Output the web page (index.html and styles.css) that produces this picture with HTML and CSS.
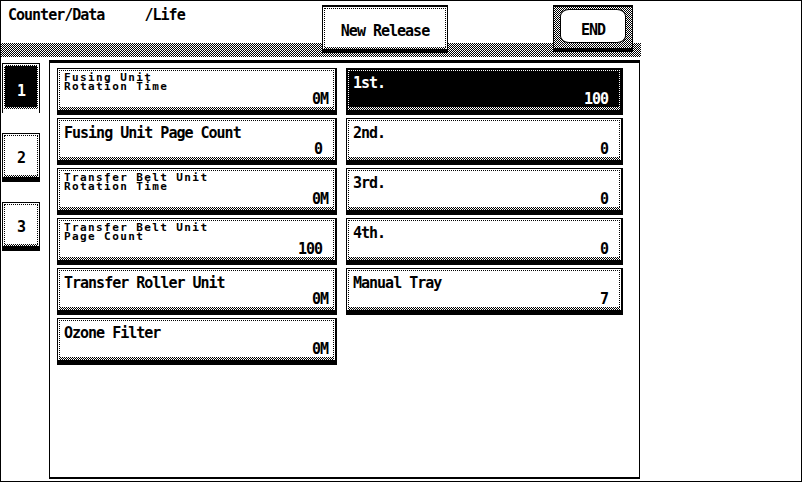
FILE: index.html
```html
<!DOCTYPE html>
<html lang="en">
<head>
<meta charset="utf-8">
<title>Counter/Data /Life</title>
<link rel="stylesheet" href="styles.css">
</head>
<body>
<div class="screen">
  <header class="top">
    <h1 class="title">Counter/Data     /Life</h1>
    <button class="key key-new"><span class="key-face">New Release</span></button>
    <button class="key key-end"><span class="end-face">END</span></button>
    <div class="band"></div>
  </header>

  <div class="work">
    <nav class="tabs">
      <div class="tab tab-on"><span class="tab-face">1</span></div>
      <div class="tab"><span class="tab-face">2</span></div>
      <div class="tab"><span class="tab-face">3</span></div>
    </nav>

    <main class="panel">
      <section class="col col-left">
        <div class="cell">
          <div class="cell-face">
            <span class="lbl lbl-small">Fusing Unit<br>Rotation Time</span>
            <span class="val val-unit">0M</span>
          </div>
        </div>
        <div class="cell">
          <div class="cell-face">
            <span class="lbl">Fusing Unit Page Count</span>
            <span class="val">0</span>
          </div>
        </div>
        <div class="cell">
          <div class="cell-face">
            <span class="lbl lbl-small">Transfer Belt Unit<br>Rotation Time</span>
            <span class="val val-unit">0M</span>
          </div>
        </div>
        <div class="cell">
          <div class="cell-face">
            <span class="lbl lbl-small">Transfer Belt Unit<br>Page Count</span>
            <span class="val">100</span>
          </div>
        </div>
        <div class="cell">
          <div class="cell-face">
            <span class="lbl">Transfer Roller Unit</span>
            <span class="val val-unit">0M</span>
          </div>
        </div>
        <div class="cell">
          <div class="cell-face">
            <span class="lbl">Ozone Filter</span>
            <span class="val val-unit">0M</span>
          </div>
        </div>
      </section>

      <section class="col col-right">
        <div class="cell cell-on">
          <div class="cell-face">
            <span class="lbl">1st.</span>
            <span class="val">100</span>
          </div>
        </div>
        <div class="cell">
          <div class="cell-face">
            <span class="lbl">2nd.</span>
            <span class="val">0</span>
          </div>
        </div>
        <div class="cell">
          <div class="cell-face">
            <span class="lbl">3rd.</span>
            <span class="val">0</span>
          </div>
        </div>
        <div class="cell">
          <div class="cell-face">
            <span class="lbl">4th.</span>
            <span class="val">0</span>
          </div>
        </div>
        <div class="cell">
          <div class="cell-face">
            <span class="lbl">Manual Tray</span>
            <span class="val">7</span>
          </div>
        </div>
      </section>
    </main>
  </div>
</div>
</body>
</html>
```

FILE: styles.css
```css
* {
  box-sizing: border-box;
  margin: 0;
  padding: 0;
}

html,
body {
  background: #fff;
}

body {
  font-family: "DejaVu Sans Mono", "Liberation Mono", monospace;
  font-size: 15px;
  line-height: 15px;
  letter-spacing: -1px;
  color: #000;
}

/* 1px halftone used for shadows and the header strip */
.band,
.key-new::after,
.cell::after,
.tab::after,
.key-end {
  background-image: repeating-conic-gradient(#000 0 25%, #fff 0 50%);
  background-size: 2px 2px;
}

.screen {
  width: 802px;
  height: 482px;
  border: 1px solid #000;
  display: flex;
  flex-direction: column;
  overflow: hidden;
}

/* ---------- header ---------- */
.top {
  flex: none;
  height: 59px;
  display: grid;
  grid-template-columns: 321px 126px 105px 80px 8px 1fr;
  grid-template-rows: 42px 14px 3px;
}

.title {
  grid-row: 1;
  grid-column: 1;
  font-size: 15px;
  font-weight: bold;
  white-space: pre;
  padding: 7px 0 0 7px;
}

.band {
  grid-row: 2;
  grid-column: 1 / 6;
}

.key {
  grid-row: 1 / 3;
  align-self: start;
  margin-top: 4px;
  position: relative;
  z-index: 1;
  font: inherit;
  font-weight: bold;
  letter-spacing: -1px;
  color: #000;
  background-color: #fff;
  border: 1px solid #000;
  border-top-width: 2px;
  border-bottom-width: 4px;
  cursor: pointer;
}

.key-new {
  grid-column: 2;
  height: 48px;
  display: flex;
  flex-direction: column;
  padding: 1px 1px 0 1px;
}

.key-new::after {
  content: "";
  height: 2px;
  flex: none;
}

.key-face {
  flex: 1;
  border: 1px dotted #000;
  border-bottom: 0;
  display: flex;
  align-items: center;
  justify-content: center;
  padding-top: 7px;
}

.key-end {
  grid-column: 4;
  height: 47px;
  padding: 2px 6px 5px 6px;
  display: flex;
}

.end-face {
  flex: 1;
  background: #fff;
  border: 1px solid #000;
  border-radius: 9px / 7px;
  display: flex;
  align-items: center;
  justify-content: center;
  padding-top: 8px;
}

/* ---------- body ---------- */
.work {
  flex: 1;
  display: flex;
}

.tabs {
  width: 48px;
  flex: none;
  display: flex;
  flex-direction: column;
  gap: 20px;
  padding: 3px 0 0 1px;
}

.tab {
  width: 38px;
  height: 49px;
  border: 1px solid #000;
  border-bottom-width: 5px;
  padding: 1px 1px 0 1px;
  display: flex;
  flex-direction: column;
  background-color: #fff;
  font-weight: bold;
}

.tab::after {
  content: "";
  height: 2px;
  flex: none;
}

.tab-face {
  flex: 1;
  border: 1px dotted #000;
  border-bottom: 0;
  display: flex;
  align-items: center;
  justify-content: center;
  padding-top: 5px;
}

.tab-on {
  height: 50px;
  border-bottom: 0;
  padding-bottom: 0;
}

.tab-on .tab-face {
  flex: none;
  height: 42px;
  background: #000;
  color: #fff;
  border-color: #fff;
  border-bottom: 0;
  padding-top: 9px;
}

.panel {
  width: 591px;
  height: 419px;
  border: 1px solid #000;
  border-top-width: 3px;
  border-bottom-width: 2px;
  padding: 5px 0 0 7px;
  display: flex;
  align-items: flex-start;
  gap: 9px;
}

.col {
  display: flex;
  flex-direction: column;
  gap: 3px;
}

.col-left {
  width: 280px;
}

.col-right {
  width: 277px;
}

.cell {
  height: 47px;
  border: 1px solid #000;
  border-right-width: 2px;
  border-bottom-width: 5px;
  padding: 1px 1px 0 1px;
  display: flex;
  flex-direction: column;
  background-color: #fff;
  font-weight: bold;
}

.cell::after {
  content: "";
  height: 3px;
  flex: none;
}

.cell-face {
  flex: 1;
  border: 1px dotted #000;
  border-bottom: 0;
  padding: 5px 11px 0 4px;
  display: flex;
  flex-direction: column;
  justify-content: space-between;
}

.cell-on {
  background-color: #000;
  color: #fff;
}

.cell-on .cell-face {
  border-color: #fff;
}

.lbl-small {
  font-size: 11px;
  line-height: 9px;
  letter-spacing: 1.4px;
  margin-top: -3px;
}

.val {
  text-align: right;
}

.val-unit {
  margin-right: -6px;
}
```
